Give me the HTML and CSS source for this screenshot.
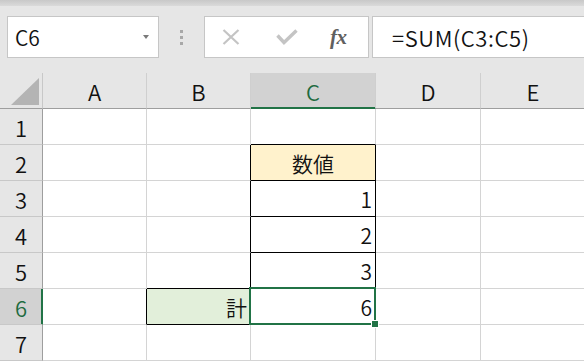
FILE: index.html
```html
<!DOCTYPE html>
<html lang="ja">
<head>
<meta charset="utf-8">
<title>Excel</title>
<link rel="stylesheet" href="styles.css">
</head>
<body>
<div class="app">
  <div class="topstrip"></div>
  <div class="formula-row">
    <div class="namebox"><span class="name">C6</span><span class="caret"></span></div>
    <div class="grip"><i></i><i></i><i></i></div>
    <div class="btnbox">
      <svg class="ic-x" width="18" height="16" viewBox="0 0 18 16"><path d="M1.5 1 L16.5 15 M16.5 1 L1.5 15" stroke="#c4c4c4" stroke-width="2.2" fill="none"/></svg>
      <svg class="ic-ok" width="22" height="16" viewBox="0 0 22 16"><path d="M1.5 6.5 L8 13.5 L20.5 1.5" stroke="#c4c4c4" stroke-width="3.4" fill="none"/></svg>
      <span class="fx">fx</span>
    </div>
    <div class="formula">=SUM(C3:C5)</div>
  </div>
  <div class="sheet">
    <div class="c hd corner"><span class="tri"></span></div>
    <div class="c hd colhd">A</div>
    <div class="c hd colhd">B</div>
    <div class="c hd colhd colsel">C</div>
    <div class="c hd colhd">D</div>
    <div class="c hd colhd">E</div>

    <div class="c hd rowhd">1</div>
    <div class="c"></div>
    <div class="c"></div>
    <div class="c bb"></div>
    <div class="c"></div>
    <div class="c"></div>

    <div class="c hd rowhd">2</div>
    <div class="c"></div>
    <div class="c br"></div>
    <div class="c br bb head center">数値</div>
    <div class="c"></div>
    <div class="c"></div>

    <div class="c hd rowhd">3</div>
    <div class="c"></div>
    <div class="c br"></div>
    <div class="c br bb num">1</div>
    <div class="c"></div>
    <div class="c"></div>

    <div class="c hd rowhd">4</div>
    <div class="c"></div>
    <div class="c br"></div>
    <div class="c br bb num">2</div>
    <div class="c"></div>
    <div class="c"></div>

    <div class="c hd rowhd">5</div>
    <div class="c"></div>
    <div class="c br bb"></div>
    <div class="c br bb num">3</div>
    <div class="c"></div>
    <div class="c"></div>

    <div class="c hd rowhd rowsel">6</div>
    <div class="c br"></div>
    <div class="c br bb total num">計</div>
    <div class="c num active">6<span class="sel"></span><span class="handle"></span></div>
    <div class="c"></div>
    <div class="c"></div>

    <div class="c hd rowhd">7</div>
    <div class="c"></div>
    <div class="c"></div>
    <div class="c"></div>
    <div class="c"></div>
    <div class="c"></div>
  </div>
</div>
</body>
</html>
```

FILE: styles.css
```css
* { box-sizing: border-box; }
html, body { margin: 0; padding: 0; }
body {
  width: 584px;
  height: 361px;
  overflow: hidden;
  background: #e6e6e6;
  font-family: "Noto Sans CJK JP", "Noto Sans", sans-serif;
  font-weight: 350;
  color: #111;
}
.app { width: 584px; height: 361px; overflow: hidden; }
.topstrip { height: 6px; background: linear-gradient(#c8c8c8, #dadada); }

.formula-row {
  height: 67px;
  display: flex;
  align-items: flex-start;
  padding: 10px 0 0 7px;
}
.namebox {
  flex: none;
  width: 152px;
  height: 42px;
  background: #fff;
  border: 1px solid #c6c6c6;
  display: flex;
  align-items: center;
  justify-content: space-between;
  padding: 0 9px 0 7px;
  font-size: 21px;
}
.caret {
  width: 0; height: 0;
  border-left: 3.5px solid transparent;
  border-right: 3.5px solid transparent;
  border-top: 4px solid #7a7a7a;
}
.grip {
  flex: none;
  width: 45px;
  height: 42px;
  display: flex;
  flex-direction: column;
  align-items: center;
  justify-content: center;
  gap: 3px;
}
.grip i { display: block; width: 3px; height: 3px; background: #a8a8a8; }
.btnbox {
  flex: none;
  width: 165px;
  height: 42px;
  background: #fff;
  border: 1px solid #c6c6c6;
  display: flex;
  align-items: center;
}
.ic-x { margin-left: 17px; flex: none; }
.ic-ok { margin-left: 36px; flex: none; }
.fx {
  margin-left: 32px;
  font-family: "Liberation Serif", serif;
  font-style: italic;
  font-weight: bold;
  font-size: 21px;
  color: #606060;
  letter-spacing: -0.5px;
}
.formula {
  flex: none;
  width: 230px;
  height: 42px;
  margin-left: 3px;
  background: #fff;
  border: 1px solid #c6c6c6;
  border-right: none;
  display: flex;
  align-items: center;
  padding-left: 19px;
  font-size: 22px;
  letter-spacing: 0.6px;
}

.sheet {
  display: grid;
  grid-template-columns: 43px 104px 104px 125px 105px 105px;
  grid-auto-rows: 36px;
  background: #fff;
}
.c {
  border-right: 1px solid #d4d4d4;
  border-bottom: 1px solid #d4d4d4;
  display: flex;
  align-items: center;
  font-size: 21px;
  padding: 0 3px;
  white-space: nowrap;
}
.hd { background: #e6e6e6; justify-content: center; padding: 0; font-size: 22px; }
.colhd { border-right-color: #cfcfcf; border-bottom-color: #9e9e9e; }
.rowhd { border-right-color: #9e9e9e; border-bottom-color: #c8c8c8; }
.corner {
  border-right-color: #c8c8c8;
  border-bottom-color: #9e9e9e;
  justify-content: flex-end;
  align-items: flex-end;
  padding: 0 3px 3px 0;
}
.tri {
  width: 28px; height: 27px;
  background: #b4b4b4;
  clip-path: polygon(100% 0, 100% 100%, 0 100%);
}
.colsel {
  background: #d2d2d2;
  color: #1e6b40;
  border-bottom-color: #217346;
  box-shadow: inset 0 -1px 0 #217346;
}
.rowsel {
  background: #d2d2d2;
  color: #1e6b40;
  border-right-color: #217346;
  box-shadow: inset -1px 0 0 #217346;
}
.br { border-right-color: #000; }
.bb { border-bottom-color: #000; }
.center { justify-content: center; }
.num { justify-content: flex-end; }
.head { background: #fff2cc; }
.total { background: #e2efda; }
.active { position: relative; }
.sel {
  position: absolute;
  left: -2px;
  top: -2px;
  width: 127px;
  height: 38px;
  border: 2px solid #217346;
}
.handle {
  position: absolute;
  left: 121px;
  top: 32px;
  width: 6px;
  height: 6px;
  background: #217346;
  outline: 1px solid #fff;
}
```
